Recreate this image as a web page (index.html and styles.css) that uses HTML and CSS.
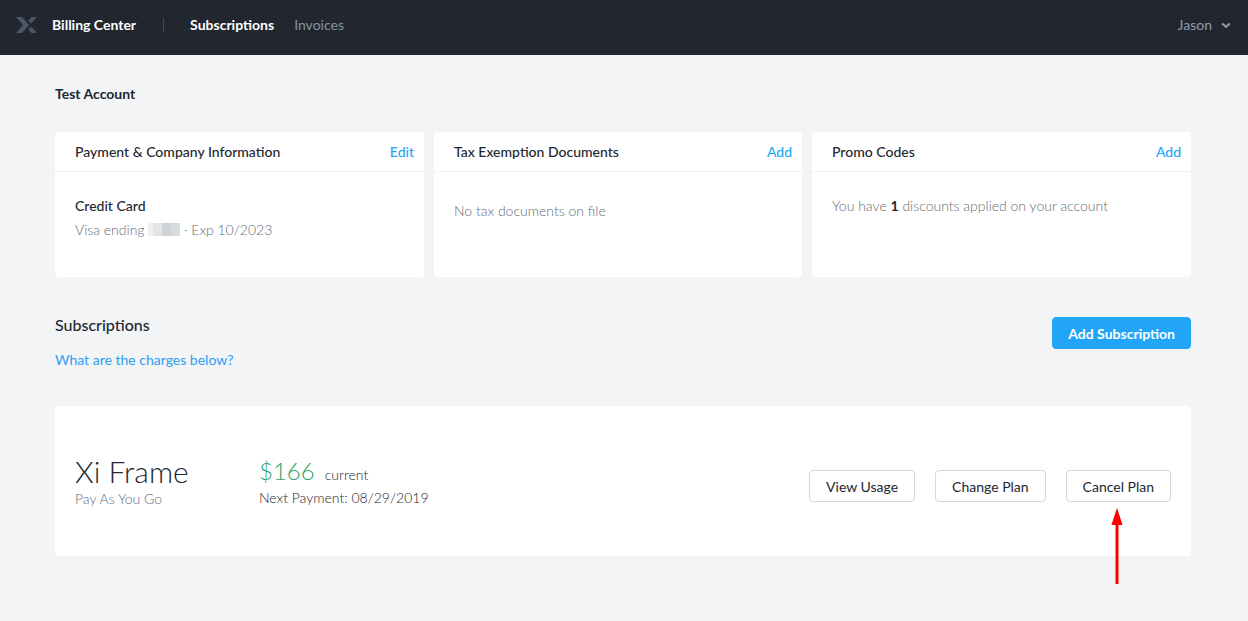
FILE: index.html
```
<!DOCTYPE html>
<html lang="en">
<head>
<meta charset="utf-8">
<meta name="viewport" content="width=device-width, initial-scale=1">
<title>Billing Center</title>
<link rel="stylesheet" href="styles.css">
</head>
<body>
<header class="topbar">
  <svg class="logo" width="22" height="16" viewBox="0 0 22 16" aria-hidden="true">
    <path d="M0 0h6l7 8-7 8H0l7-8z"/>
    <path d="M15.5 0H21l-6 6.5-2.6-3z"/>
    <path d="M15.5 16H21l-6-6.5-2.6 3z"/>
  </svg>
  <span class="brand">Billing Center</span>
  <span class="divider"></span>
  <nav class="nav">
    <a class="nav-link active" href="#">Subscriptions</a>
    <a class="nav-link" href="#">Invoices</a>
  </nav>
  <button class="user" type="button">Jason
    <svg width="10" height="7" viewBox="0 0 10 7" aria-hidden="true"><path d="M1.2 1.4 5 4.8 8.8 1.4" fill="none" stroke="currentColor" stroke-width="2"/></svg>
  </button>
</header>
<main class="page">
  <h1 class="account">Test Account</h1>
  <div class="cards">
    <section class="card">
      <header class="card-head"><h2 class="card-title">Payment &amp; Company Information</h2><a class="card-action" href="#">Edit</a></header>
      <div class="card-body">
        <h3 class="method">Credit Card</h3>
        <p class="muted">Visa ending <span class="masked"><i></i><i></i><i></i><i></i></span> · Exp 10/2023</p>
      </div>
    </section>
    <section class="card">
      <header class="card-head"><h2 class="card-title">Tax Exemption Documents</h2><a class="card-action" href="#">Add</a></header>
      <div class="card-body card-body-empty"><p class="muted">No tax documents on file</p></div>
    </section>
    <section class="card">
      <header class="card-head"><h2 class="card-title">Promo Codes</h2><a class="card-action" href="#">Add</a></header>
      <div class="card-body"><p class="muted">You have <b class="count">1</b> discounts applied on your account</p></div>
    </section>
  </div>
  <div class="section-head">
    <div>
      <h2 class="section-title">Subscriptions</h2>
      <a class="help" href="#">What are the charges below?</a>
    </div>
    <button class="btn btn-primary" type="button">Add Subscription</button>
  </div>
  <section class="plan">
    <div class="plan-name">
      <h3 class="plan-title">Xi Frame</h3>
      <p class="muted">Pay As You Go</p>
    </div>
    <div class="plan-cost">
      <p class="cost"><span class="price">$166</span><span>current</span></p>
      <p class="next">Next Payment: 08/29/2019</p>
    </div>
    <div class="actions">
      <button class="btn" type="button">View Usage</button>
      <button class="btn" type="button">Change Plan</button>
      <div class="pointed">
        <button class="btn" type="button">Cancel Plan</button>
        <svg class="arrow" width="12" height="76" viewBox="0 0 12 76" aria-hidden="true"><path d="M6 0 11.6 17H7.5V76H4.5V17H0.4z"/></svg>
      </div>
    </div>
  </section>
</main>
</body>
</html>
```
FILE: styles.css
```
* { box-sizing: border-box; }
body {
  margin: 0;
  background: #f2f4f6;
  color: #22272f;
  font: 14px/20px Lato, "Liberation Sans", sans-serif;
}
h1, h2, h3, p { margin: 0; }
a { text-decoration: none; }
button { font: inherit; cursor: pointer; }

.topbar {
  display: flex;
  align-items: center;
  height: 55px;
  padding: 0 17px 5px 16px;
  background: #22272f;
}
.logo { fill: #4c5765; }
.brand { margin-left: 14px; color: #fff; font-weight: 700; }
.divider { width: 1px; height: 14px; margin: 0 26px 0 27px; background: #414954; }
.nav { display: flex; gap: 20px; }
.nav-link { color: #8594a5; }
.nav-link.active { color: #fff; font-weight: 700; }
.user {
  display: flex;
  align-items: center;
  gap: 9px;
  margin-left: auto;
  padding: 0;
  border: 0;
  background: none;
  color: #8c9bab;
}

.page { padding: 29px 57px 65px 55px; }
.account { font-size: 14px; line-height: 20px; font-weight: 700; }

.cards {
  display: grid;
  grid-template-columns: 369fr 368fr 379fr;
  gap: 10px;
  margin-top: 28px;
}
.card { min-height: 145px; border-radius: 4px; background: #fff; }
.card-head {
  display: flex;
  justify-content: space-between;
  padding: 10px 10px 9px 20px;
  border-bottom: 1px solid #f0f2f4;
}
.card-title { font-size: 14px; line-height: 20px; font-weight: 500; }
.card-action { color: #22a5f7; font-weight: 500; }
.card-body { padding: 24px 20px; }
.card-body-empty { padding-top: 29px; }
.method { margin-bottom: 4px; font-size: 14px; line-height: 20px; font-weight: 500; }
.muted { color: #5f6c78; font-weight: 300; }
.count { color: #22272f; font-weight: 700; }
.masked { display: inline-flex; height: 13px; vertical-align: -1px; }
.masked i { width: 9px; background: #e3e6e8; }
.masked i:first-child { width: 5px; background: #f2f1f1; }
.masked i:nth-child(3) { background: #cfd3d6; }
.masked i:nth-child(4) { background: #d5dce0; }

.section-head {
  display: flex;
  justify-content: space-between;
  align-items: flex-start;
  margin-top: 40px;
}
.section-title { margin: -2px 0 15px; font-size: 16px; line-height: 20px; font-weight: 500; }
.help { color: #2f9df4; }

.btn {
  height: 32px;
  padding: 2px 16px 0;
  border: 1px solid #d3d8de;
  border-radius: 4px;
  background: #fff;
  color: #22272f;
  white-space: nowrap;
}
.btn-primary {
  padding: 2px 15px 0;
  border-color: #22a5f7;
  background: #22a5f7;
  color: #fff;
  font-weight: 700;
}

.plan {
  display: flex;
  align-items: flex-start;
  min-height: 150px;
  margin-top: 36px;
  padding: 48px 20px 46px;
  border-radius: 4px;
  background: #fff;
}
.plan-name { width: 184px; }
.plan-title { font-size: 30px; line-height: 35px; font-weight: 300; }
.cost { display: flex; align-items: baseline; gap: 10px; font-weight: 300; }
.price { color: #2ba56a; font-size: 24px; line-height: 34px; }
.next { font-weight: 300; }
.actions { display: flex; gap: 20px; margin: 16px 0 0 auto; }
.pointed { position: relative; }
.arrow { position: absolute; top: 38px; left: 45px; fill: #f00; }
```
